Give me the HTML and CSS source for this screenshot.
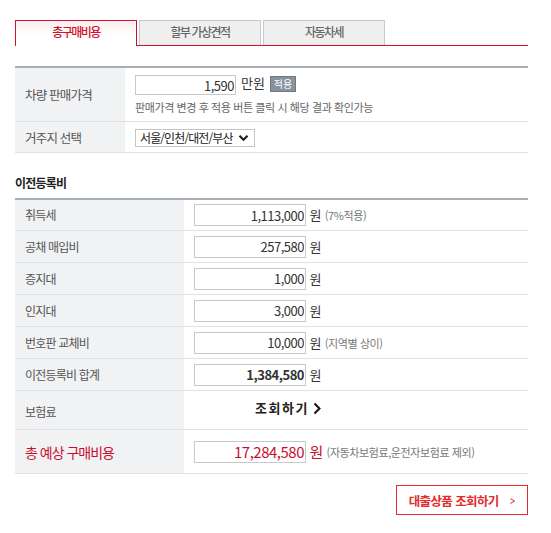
FILE: index.html
```html
<!DOCTYPE html>
<html lang="ko">
<head>
    <meta charset="UTF-8">
    <meta name="viewport" content="width=device-width, initial-scale=1.0">
    <title>총 구매비용</title>
    <link rel="stylesheet" href="styles.css">
</head>
<body>
    <div class="wrap">
        <ul class="tabs">
            <li class="tab on">총구매비용</li>
            <li class="tab">할부 가상견적</li>
            <li class="tab">자동차세</li>
        </ul>

        <table class="calc calc-top">
            <tr>
                <th>차량 판매가격</th>
                <td>
                    <div class="line">
                        <input type="text" class="num num-price" value="1,590">
                        <span class="unit unit-big">만원</span>
                        <button class="btn-apply">적용</button>
                    </div>
                    <p class="help">판매가격 변경 후 적용 버튼 클릭 시 해당 결과 확인가능</p>
                </td>
            </tr>
            <tr>
                <th>거주지 선택</th>
                <td>
                    <div class="select">
                        <span>서울/인천/대전/부산</span>
                        <svg width="11" height="8" viewBox="0 0 11 8"><path d="M1.5 1.8 5.5 5.8 9.5 1.8" fill="none" stroke="#222" stroke-width="2.2"/></svg>
                    </div>
                </td>
            </tr>
        </table>

        <h3 class="sub-title">이전등록비</h3>

        <table class="calc calc-fee">
            <tr>
                <th>취득세</th>
                <td><input type="text" class="num" value="1,113,000"> <span class="unit">원</span> <span class="note">(7%적용)</span></td>
            </tr>
            <tr>
                <th>공채 매입비</th>
                <td><input type="text" class="num" value="257,580"> <span class="unit">원</span></td>
            </tr>
            <tr>
                <th>증지대</th>
                <td><input type="text" class="num" value="1,000"> <span class="unit">원</span></td>
            </tr>
            <tr>
                <th>인지대</th>
                <td><input type="text" class="num" value="3,000"> <span class="unit">원</span></td>
            </tr>
            <tr>
                <th>번호판 교체비</th>
                <td><input type="text" class="num" value="10,000"> <span class="unit">원</span> <span class="note">(지역별 상이)</span></td>
            </tr>
            <tr>
                <th>이전등록비 합계</th>
                <td><input type="text" class="num num-sum" value="1,384,580"> <span class="unit">원</span></td>
            </tr>
            <tr class="row-ins">
                <th>보험료</th>
                <td><a class="link-ins" href="#">조회하기 <svg width="9" height="13" viewBox="0 0 9 13"><path d="M1.5 1.5 6.5 6.5 1.5 11.5" fill="none" stroke="#111" stroke-width="2"/></svg></a></td>
            </tr>
            <tr class="row-total">
                <th>총 예상 구매비용</th>
                <td><input type="text" class="num num-total" value="17,284,580"> <span class="unit">원</span> <span class="note">(자동차보험료,운전자보험료 제외)</span></td>
            </tr>
        </table>

        <div class="btn-area">
            <a class="btn-loan" href="#">대출상품 조회하기 <span class="arr">&gt;</span></a>
        </div>
    </div>
</body>
</html>
```

FILE: styles.css
```css
* {
    box-sizing: border-box;
}
body {
    margin: 0;
    font-family: "Noto Sans CJK KR", "Noto Sans", sans-serif;
    color: #333;
    background: #fff;
}
.wrap {
    width: 513px;
    margin: 20px 0 0 15px;
}
.tabs {
    display: flex;
    gap: 2px;
    list-style: none;
    margin: 0;
    padding: 0;
    height: 26px;
    border-bottom: 1px solid #d2112e;
}
.tab {
    width: 122px;
    height: 25px;
    line-height: 22px;
    text-align: center;
    font-size: 12px;
    font-weight: 500;
    letter-spacing: -1.5px;
    color: #666;
    background: #efefef;
    border: 1px solid #c5cad2;
    border-bottom: none;
}
.tab.on {
    height: 26px;
    color: #d2112e;
    background: linear-gradient(#fbeeee, #fff 60%);
    border: 1px solid #d2112e;
    border-bottom: none;
}
.calc {
    width: 100%;
    border-collapse: collapse;
    border-top: 2px solid #a9adb6;
}
.calc-top {
    margin-top: 20px;
}
.calc th {
    text-align: left;
    font-weight: normal;
    font-size: 12px;
    line-height: 20px;
    letter-spacing: -0.8px;
    color: #555;
    background: #f1f2f4;
    padding: 0 0 0 10px;
    border-bottom: 1px solid #e1e1e1;
}
.calc td {
    padding: 0 0 0 10px;
    border-bottom: 1px solid #e1e1e1;
    font-size: 12px;
    line-height: 20px;
}
.calc-top th {
    width: 110px;
    font-size: 12.5px;
}
.calc-top tr:first-child th {
    padding-top: 2px;
}
.calc-top tr:first-child td {
    height: 54px;
    padding-top: 7px;
    vertical-align: top;
}
.calc-top tr:last-child th {
    padding-top: 2px;
}
.calc-top tr:last-child td {
    height: 31px;
}
.line {
    display: flex;
    align-items: center;
    gap: 5px;
}
.num {
    width: 112px;
    height: 22px;
    padding: 0 1px 0 0;
    border: 1px solid #c8c8c8;
    font-family: inherit;
    font-size: 13px;
    letter-spacing: -0.5px;
    text-align: right;
    color: #333;
    vertical-align: middle;
}
.num-price {
    width: 101px;
    height: 20px;
}
.unit {
    font-size: 13px;
    color: #333;
    vertical-align: middle;
}
.unit-big {
    margin-top: -4px;
}
.btn-apply {
    height: 16px;
    width: 26px;
    padding: 0;
    margin-top: -3px;
    border: 1px solid #6f7782;
    background: #8a929e;
    color: #fff;
    font-family: inherit;
    font-size: 10px;
    line-height: 13px;
}
.help {
    margin: 2px 0 0;
    font-size: 11px;
    letter-spacing: -0.4px;
    color: #666;
}
.select {
    display: inline-flex;
    align-items: center;
    gap: 5px;
    width: 120px;
    height: 18px;
    padding: 0 0 0 4px;
    border: 1px solid #c5c5c5;
    font-size: 12px;
    letter-spacing: -0.9px;
    white-space: nowrap;
    color: #222;
    vertical-align: middle;
}
.sub-title {
    margin: 21px 0 7px;
    font-size: 12px;
    font-weight: bold;
    letter-spacing: -0.8px;
    color: #222;
}
.calc-fee th {
    width: 169px;
}
.calc-fee td {
    height: 32px;
}
.note {
    font-size: 11px;
    letter-spacing: -0.4px;
    color: #777;
    vertical-align: middle;
}
.num-sum {
    font-weight: bold;
}
.row-ins th {
    padding-top: 4px;
}
.row-ins td {
    height: 39px;
    padding-bottom: 4px;
}
.link-ins {
    display: inline-flex;
    align-items: center;
    gap: 4px;
    margin-left: 61px;
    font-size: 13px;
    font-weight: bold;
    letter-spacing: 1.5px;
    color: #222;
    text-decoration: none;
}
.row-total th {
    font-size: 14px;
    letter-spacing: -1px;
    color: #c8102e;
}
.row-total td {
    height: 44px;
}
.num-total {
    font-size: 15px;
    color: #c8102e;
}
.row-total .unit {
    font-size: 15px;
    color: #c8102e;
}
.btn-area {
    display: flex;
    justify-content: flex-end;
    margin-top: 11px;
}
.btn-loan {
    display: flex;
    align-items: center;
    justify-content: center;
    gap: 10px;
    width: 132px;
    height: 30px;
    border: 1px solid #e42a2a;
    font-size: 12.5px;
    font-weight: bold;
    letter-spacing: -0.6px;
    color: #e42a2a;
    text-decoration: none;
}
.arr {
    font-weight: normal;
    font-size: 13px;
    transform: scaleX(0.7);
}
```
